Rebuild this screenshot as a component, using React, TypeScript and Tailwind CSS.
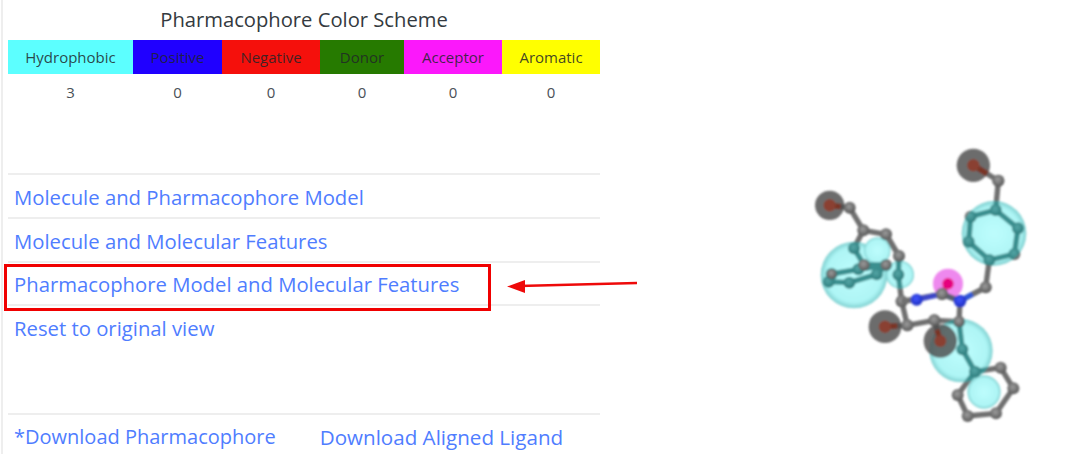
const cols = [
  { name: "Hydrophobic", bg: "bg-[#5cffff]", n: 3 },
  { name: "Positive", bg: "bg-[#2000ff]", n: 0 },
  { name: "Negative", bg: "bg-[#f5100c]", n: 0 },
  { name: "Donor", bg: "bg-[#267a00]", n: 0 },
  { name: "Acceptor", bg: "bg-[#fb18fb]", n: 0 },
  { name: "Aromatic", bg: "bg-[#ffff00]", n: 0 },
];

type P = [number, number];
const SW = 16;
const GRAY = "#6f6f6f";
const A: Record<string, P> = {
  o1: [580, 106], c1: [655, 152], r1: [647, 240], r2: [714, 295], r3: [703, 372], r4: [628, 390], r5: [566, 335], r6: [572, 260],
  c2: [617, 472], n1: [540, 513], c3: [486, 492], o2: [504, 461], n2: [410, 509], c4: [365, 514], c5: [382, 586], o3: [315, 590],
  c6: [463, 571], o4: [481, 633], c7: [537, 575], c8: [547, 658], p1: [585, 725], p2: [662, 713], p3: [700, 775], p4: [648, 850], p5: [563, 858], p6: [533, 795],
  o5: [149, 226], c9: [209, 233], c10: [250, 301], c11: [318, 313], c12: [357, 378], c13: [355, 434], c14: [222, 355], c15: [252, 405],
  q1: [318, 405], q2: [290, 433], q3: [208, 458], q4: [146, 455], q5: [155, 432], q6: [235, 418],
};
const bonds: [string, string][] = [
  ["c1", "r1"], ["r1", "r2"], ["r2", "r3"], ["r3", "r4"], ["r4", "r5"], ["r5", "r6"], ["r6", "r1"], ["r4", "c2"],
  ["c3", "c4"], ["c4", "c5"], ["c5", "c6"], ["c6", "c7"], ["c7", "n1"], ["c7", "c8"], ["c8", "p1"], ["p1", "p2"], ["p2", "p3"], ["p3", "p4"], ["p4", "p5"], ["p5", "p6"], ["p6", "p1"],
  ["c9", "c10"], ["c10", "c11"], ["c11", "c12"], ["c12", "c13"], ["c13", "c4"], ["c10", "c14"], ["c14", "c15"], ["c15", "q1"],
  ["q1", "q2"], ["q2", "q3"], ["q3", "q4"], ["q4", "q5"], ["q5", "q6"], ["q6", "q1"], ["c2", "n1"], ["n1", "c3"],
];
const cyan: [number, number, number][] = [[642, 310, 97], [222, 435, 100], [292, 362, 40], [360, 434, 42], [543, 662, 95], [612, 786, 50]];
const dark: [number, number, number][] = [[580, 106, 50], [149, 226, 44], [315, 590, 49], [481, 633, 50]];
const heteroBonds: [P, P][] = [[A.o1, A.c1], [A.o5, A.c9], [A.o3, A.c5], [A.o4, A.c6]];

function Skeleton({ bond, atom }: { bond: string; atom: string }) {
  return (
    <g>
      {bonds.map(([a, b], i) => (
        <line key={i} x1={A[a][0]} y1={A[a][1]} x2={A[b][0]} y2={A[b][1]} stroke={bond} strokeWidth={SW} />
      ))}
      {Object.entries(A)
        .filter(([k]) => !["o1", "o2", "o3", "o4", "o5", "n1", "n2"].includes(k))
        .map(([k, p]) => (
          <circle key={k} cx={p[0]} cy={p[1]} r={18} fill={atom} />
        ))}
    </g>
  );
}

function Molecule() {
  return (
    <svg viewBox="0 0 780 900" className="w-[260px] h-[300px] shrink-0">
      <defs>
        <radialGradient id="atom" cx="45%" cy="40%" r="60%">
          <stop offset="0%" stopColor="#9c9c9c" />
          <stop offset="100%" stopColor="#5a5a5a" />
        </radialGradient>
        <radialGradient id="tealAtom" cx="45%" cy="40%" r="60%">
          <stop offset="0%" stopColor="#55a6a6" />
          <stop offset="100%" stopColor="#2c7c7c" />
        </radialGradient>
        <radialGradient id="cy" cx="50%" cy="50%" r="50%">
          <stop offset="0%" stopColor="#bdfdfd" />
          <stop offset="82%" stopColor="#aef5f5" />
          <stop offset="100%" stopColor="#80d0d0" />
        </radialGradient>
        <radialGradient id="blue" cx="45%" cy="40%" r="60%">
          <stop offset="0%" stopColor="#3f55ff" />
          <stop offset="100%" stopColor="#1f2fc0" />
        </radialGradient>
        <clipPath id="cyanClip">
          {cyan.map(([x, y, r], i) => (
            <circle key={i} cx={x} cy={y} r={r} />
          ))}
        </clipPath>
        <filter id="soft">
          <feGaussianBlur stdDeviation="2.6" />
        </filter>
      </defs>
      <g filter="url(#soft)">
        <circle cx={504} cy={461} r={45} fill="#ee88ee" />
        <Skeleton bond={GRAY} atom="url(#atom)" />
        {cyan.map(([x, y, r], i) => (
          <circle key={i} cx={x} cy={y} r={r} fill="url(#cy)" />
        ))}
        <g clipPath="url(#cyanClip)">
          <Skeleton bond="#3a8f8f" atom="url(#tealAtom)" />
        </g>
        <line x1={357} y1={378} x2={318} y2={313} stroke={GRAY} strokeWidth={SW} />
        <circle cx={252} cy={405} r={17} fill="url(#atom)" />
        <circle cx={318} cy={405} r={16} fill="url(#atom)" />
        <circle cx={155} cy={432} r={15} fill="url(#atom)" />
        <circle cx={357} cy={378} r={17} fill="url(#atom)" />
        <circle cx={318} cy={313} r={17} fill="url(#atom)" />
        <circle cx={250} cy={301} r={17} fill="url(#atom)" />
        <circle cx={365} cy={514} r={18} fill="url(#atom)" />
        <line x1={486} y1={492} x2={504} y2={461} stroke="#c81a8c" strokeWidth={SW} />
        <circle cx={504} cy={461} r={17} fill="#e6007e" />
        <line x1={365} y1={514} x2={410} y2={509} stroke={GRAY} strokeWidth={SW} />
        <line x1={410} y1={509} x2={486} y2={492} stroke="#3c46c8" strokeWidth={SW} />
        <line x1={486} y1={492} x2={540} y2={513} stroke="#5a6070" strokeWidth={SW} />
        <line x1={540} y1={513} x2={578} y2={492} stroke="#2f56d8" strokeWidth={SW} />
        <line x1={578} y1={492} x2={617} y2={472} stroke={GRAY} strokeWidth={SW} />
        <circle cx={617} cy={472} r={17} fill="url(#atom)" />
        <circle cx={486} cy={492} r={18} fill="url(#atom)" />
        <circle cx={410} cy={509} r={18} fill="url(#blue)" />
        <circle cx={540} cy={513} r={19} fill="url(#blue)" />
        {heteroBonds.map(([a, b], i) => (
          <line key={i} x1={a[0]} y1={a[1]} x2={b[0]} y2={b[1]} stroke={GRAY} strokeWidth={SW} />
        ))}
        <circle cx={655} cy={152} r={18} fill="url(#atom)" />
        <circle cx={209} cy={233} r={16} fill="url(#atom)" />
        <circle cx={382} cy={586} r={18} fill="url(#atom)" />
        <circle cx={463} cy={571} r={18} fill="url(#atom)" />
        <circle cx={537} cy={575} r={16} fill="url(#atom)" />
        {dark.map(([x, y, r], i) => (
          <circle key={i} cx={x} cy={y} r={r} fill="#4d4d4d" fillOpacity={0.82} />
        ))}
        {heteroBonds.map(([a, b], i) => {
          const mx = a[0] + (b[0] - a[0]) * 0.55;
          const my = a[1] + (b[1] - a[1]) * 0.55;
          return <line key={i} x1={a[0]} y1={a[1]} x2={mx} y2={my} stroke="#7a3528" strokeWidth={SW} />;
        })}
        {dark.map(([x, y], i) => (
          <circle key={i} cx={x} cy={y} r={18} fill="#8a4030" />
        ))}
      </g>
    </svg>
  );
}

function LinkRow({ children, boxed, h }: { children: string; boxed?: boolean; h: string }) {
  return (
    <div className={`relative shrink-0 ${h} border-t-2 border-[#eeeeee] pl-[6px] pt-[2px] flex items-center text-[20.3px] text-[#4f7dff]`}>
      {children}
      {boxed && (
        <>
          <div className="absolute z-10 left-[-4px] top-[1px] w-[487px] h-[47px] border-[3px] border-[#f00000]" />
          <svg className="absolute z-10 left-[495px] top-[10px] w-[140px] h-[24px]" viewBox="0 0 140 24">
            <line x1="16" y1="13" x2="134" y2="10" stroke="#ee0a0a" strokeWidth="2.4" />
            <polygon points="4,13.5 22,7 22,20" fill="#ee0a0a" />
          </svg>
        </>
      )}
    </div>
  );
}

export default function App() {
  return (
    <div
      className="w-[1080px] h-[454px] overflow-hidden bg-white flex"
      style={{ fontFamily: '"Open Sans", "Noto Sans", sans-serif' }}
    >
      <div className="w-[2px] h-full bg-[#eeeeee] shrink-0 ml-[1px]" />
      <div className="w-[592px] ml-[5px] shrink-0 flex flex-col">
        <div className="h-[40px] shrink-0 pb-[2px] flex items-center justify-center text-[20.2px] text-[#343a40]">
          Pharmacophore Color Scheme
        </div>
        <div className="grid grid-cols-[125px_89px_98px_84px_98px_98px] h-[34px] shrink-0 text-[15px] text-[#212529]/85">
          {cols.map((c) => (
            <div key={c.name} className={`flex items-center justify-center ${c.bg}`}>
              {c.name}
            </div>
          ))}
        </div>
        <div className="grid grid-cols-[125px_89px_98px_84px_98px_98px] h-[36px] shrink-0 text-[15px] text-[#495057]">
          {cols.map((c) => (
            <div key={c.name} className="flex items-center justify-center">
              {c.n}
            </div>
          ))}
        </div>
        <div className="h-[63px] shrink-0" />
        <LinkRow h="h-[44px]">Molecule and Pharmacophore Model</LinkRow>
        <LinkRow h="h-[44px]">Molecule and Molecular Features</LinkRow>
        <LinkRow h="h-[43px]" boxed>Pharmacophore Model and Molecular Features</LinkRow>
        <LinkRow h="h-[44px]">Reset to original view</LinkRow>
        <div className="h-[65px] shrink-0" />
        <div className="h-[40px] shrink-0 border-t-2 border-[#eeeeee] pl-[6px] pt-[6px] flex items-center gap-[44px] text-[#4f7dff]">
          <span className="text-[20px]">*Download Pharmacophore</span>
          <span className="text-[20.6px]">Download Aligned Ligand</span>
        </div>
      </div>
      <div className="ml-[180px] pt-[130px]">
        <Molecule />
      </div>
    </div>
  );
}
